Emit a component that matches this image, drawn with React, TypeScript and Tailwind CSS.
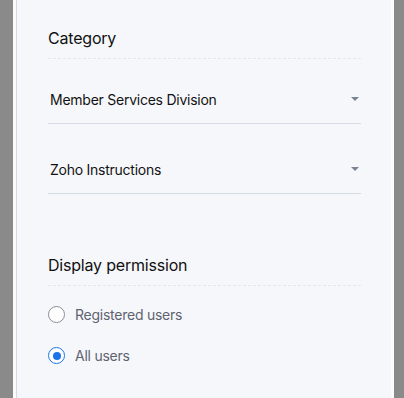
import React from 'react';

const font = { fontFamily: 'Inter, "Noto Sans", sans-serif' };

function Caret() {
  return (
    <svg width="8" height="4" viewBox="0 0 8 4" className="shrink-0">
      <path d="M0 0 H8 L4 4 Z" fill="#7b8494" />
    </svg>
  );
}

function SelectRow({ label, className }: { label: string; className: string }) {
  return (
    <div className={`flex h-[49px] items-center justify-between border-b border-[#d6dce6] pl-[2px] pr-[2px] ${className}`}>
      <span className="text-[14px] tracking-[-0.25px] text-[#121212]">{label}</span>
      <Caret />
    </div>
  );
}

function Radio({ label, checked }: { label: string; checked?: boolean }) {
  return (
    <label className="flex h-[41px] items-center gap-[10px]">
      {checked ? (
        <span className="flex h-[17px] w-[17px] items-center justify-center rounded-full border-[1.5px] border-[#1a73e8] bg-white">
          <span className="h-[8px] w-[8px] rounded-full bg-[#1a73e8]" />
        </span>
      ) : (
        <span className="h-[17px] w-[17px] rounded-full border-[1.5px] border-[#8a8d94] bg-white" />
      )}
      <span className="text-[14px] tracking-[-0.25px] text-[#5e6370]">{label}</span>
    </label>
  );
}

export default function App() {
  return (
    <div className="flex h-[398px] w-[404px] bg-[#8a8a8a] pl-[13px] pr-[10px]" style={font}>
      <div className="flex flex-1 bg-[#fbfcfe] px-[3px]">
        <div className="flex-1 border-l border-[#d3dbe8] bg-[#f6f7fb] pl-[31px] pr-[30px] pt-[26px]">
          <div className="border-b border-dashed border-[#e3e7ee] pb-[8px]">
            <h2 className="text-[16px] leading-[24px] tracking-[-0.2px] text-[#111]">Category</h2>
          </div>
          <SelectRow label="Member Services Division" className="mt-[16px]" />
          <SelectRow label="Zoho Instructions" className="mt-[21px]" />

          <div className="mt-[59px] border-b border-dashed border-[#e3e7ee] pb-[8px]">
            <h2 className="text-[16px] leading-[24px] tracking-[-0.2px] text-[#111]">Display permission</h2>
          </div>
          <div className="mt-[8px] flex flex-col">
            <Radio label="Registered users" />
            <Radio label="All users" checked />
          </div>
        </div>
      </div>
    </div>
  );
}
